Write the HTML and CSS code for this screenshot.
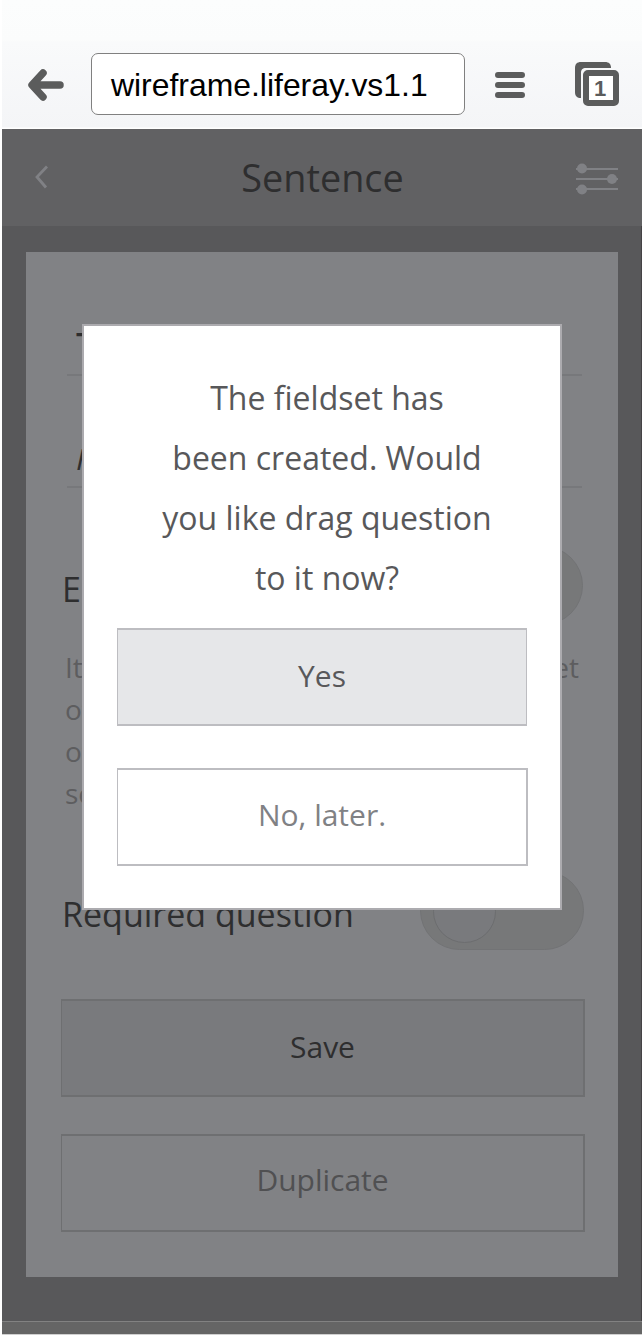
FILE: index.html
```html
<!DOCTYPE html>
<html lang="en">
<head>
<meta charset="utf-8">
<title>Sentence</title>
<link rel="stylesheet" href="styles.css">
</head>
<body>
<div class="screen">
  <header class="browser">
    <svg class="back" width="38" height="34" viewBox="0 0 38 34"><path d="M34 17H8M17 5L6 17L17 29" /></svg>
    <div class="address"><span>wireframe.liferay.vs1.1</span></div>
    <svg class="menu" width="30" height="28" viewBox="0 0 30 28"><path d="M3 4H27M3 14H27M3 24H27"/></svg>
    <div class="tabs">
      <svg width="44" height="44" viewBox="0 0 44 44"><path class="tab-back" d="M6 36C2 36 0 34 0 30V6C0 2 2 0 6 0H30C34 0 36 2 36 6H11C7.500 6 6 7.500 6 11Z"/><rect class="tab-front" x="11" y="11" width="30" height="30" rx="2"/></svg>
      <span class="tab-count">1</span>
    </div>
  </header>
  <nav class="appbar">
    <svg class="chevron" width="14" height="24" viewBox="0 0 14 24"><path d="M13 1.500L3 12L12 22.500"/></svg>
    <h1 class="title">Sentence</h1>
    <svg class="sliders" width="42" height="32" viewBox="0 0 42 32"><path d="M0 6H42M0 16H42M0 26H42"/><circle cx="6" cy="5.500" r="5"/><circle cx="36" cy="16" r="5"/><circle cx="6" cy="26.500" r="5"/></svg>
  </nav>
  <main class="content">
    <section class="card">
      <div class="field field-title">T</div>
      <div class="field field-help">H</div>
      <div class="row row-enable"><span class="label">E</span><span class="switch"></span></div>
      <div class="hint"><p><span>It</span><span>et</span></p><p>of</p><p>of</p><p>se</p></div>
      <div class="row row-required"><span class="label">Required question</span><span class="switch"><i class="knob"></i></span></div>
      <button class="btn save">Save</button>
      <button class="btn duplicate">Duplicate</button>
    </section>
  </main>
  <footer class="strip"></footer>
  <div class="modal">
    <p class="message">The fieldset has<br>been created. Would<br>you like drag question<br>to it now?</p>
    <button class="btn yes">Yes</button>
    <button class="btn later">No, later.</button>
  </div>
</div>
</body>
</html>
```
FILE: styles.css
```css
* { box-sizing: border-box; }
body { margin: 0; background: #fff; }
.screen {
  position: relative; width: 642px; height: 1335px; padding-left: 2px; overflow: hidden;
  font-family: "Open Sans", sans-serif; color: #2e2e2f;
}
.browser {
  height: 129px; padding: 42px 23px 3px 24px; display: flex; align-items: center;
  background: linear-gradient(#fcfdfd 0, #fbfcfc 40px, #f9fafb 42px, #f4f5f7 127px, #fff 128px);
}
.back, .menu { fill: none; stroke: #5b5c5c; stroke-linecap: round; stroke-linejoin: round; flex: none; margin-top: 2px; }
.back { stroke-width: 7.500px; }
.menu { stroke-width: 6px; margin-left: 30px; }
.address {
  width: 374px; height: 62px; margin-left: 27px; padding: 1px 0 0 19px; display: flex; align-items: center;
  border: 1px solid #808080; border-radius: 7px; background: #fff;
  font: 31.9px/58px "Liberation Sans", sans-serif; color: #000; white-space: nowrap;
}
.tabs { position: relative; width: 44px; height: 44px; margin-left: 50px; flex: none; }
.tabs svg { display: block; }
.tab-back { fill: #5b5c5c; }
.tab-front { fill: #fff; stroke: #5b5c5c; stroke-width: 6px; }
.tab-count {
  position: absolute; left: 13px; top: 14px; width: 24px; text-align: center;
  font: bold 22px/25px "Liberation Sans", sans-serif; color: #5b5c5c;
}
.appbar {
  height: 97px; padding: 0 24px 0 32px; display: flex; align-items: center; justify-content: space-between;
  background: #616163;
}
.chevron, .sliders { fill: none; stroke: #808185; }
.chevron { stroke-width: 2.800px; margin-top: -2px; }
.sliders { stroke-width: 1.800px; margin-top: 3px; }
.sliders circle { fill: #808185; stroke: none; }
.title { margin: 0 0 0 21px; font-size: 37.8px; line-height: 52px; font-weight: 400; }
.content { height: 1095px; padding: 26px 23px 44px 24px; background: #58585a; border-right: 1px solid #454345; }
.card { height: 1025px; padding: 57px 33px 0 35px; background: #818285; }
.field { height: 67px; margin: 0 3px 0 6px; padding-left: 9px; border-bottom: 2px solid #77787b; font-size: 33px; line-height: 70px; }
.field-title { font-weight: 600; }
.field-help { height: 66px; margin-top: 46px; font-style: italic; font-size: 30px; line-height: 73px; }
.row { display: flex; align-items: center; justify-content: space-between; height: 80px; }
.label { padding: 8px 0 0 1px; font-size: 34px; line-height: 50px; }
.row-enable { margin-top: 57px; padding-right: 2px; }
.switch { width: 164px; height: 79px; padding: 8px 12px; border: 1px solid #727375; border-radius: 40px; background: #777879; }
.knob { display: block; width: 63px; height: 63px; border: 1px solid #6c6d6f; border-radius: 50%; background: #797a7d; }
.hint { margin: 21px 6px 0 4px; font-size: 28px; line-height: 42px; color: #5d5d5f; }
.hint p { margin: 0; display: flex; justify-content: space-between; }
.row-required { margin-top: 56px; padding-right: 1px; }
.btn {
  display: block; width: 100%; height: 98px; padding: 0 0 3px; border: 2px solid #6e6f71; border-left-width: 1px; border-radius: 0;
  background: transparent; font: 30px/42px "Open Sans", sans-serif; color: #2e2e2f;
}
.save { margin-top: 49px; background: #797a7d; }
.duplicate { margin-top: 37px; color: #505052; padding-bottom: 6px; }
.strip { height: 14px; background: #656565; border-top: 1px solid #828282; border-bottom: 1px solid #d0d0d0; }
.modal {
  position: absolute; left: 82px; top: 324px; width: 480px; height: 586px; padding: 42px 32px 0 33px;
  background: #fff; border: 2px solid #acabaf;
}
.message { margin: 0 0 20px 9px; text-align: center; font-size: 32px; line-height: 60px; color: #58585a; white-space: nowrap; }
.modal .btn { width: 410px; border-color: #bdbdc1; }
.modal .yes { background: #e6e7e9; color: #58585a; border-right-width: 1px; }
.modal .later { margin: 42px 0 0; width: 411px; color: #808184; padding-bottom: 5px; }
```
